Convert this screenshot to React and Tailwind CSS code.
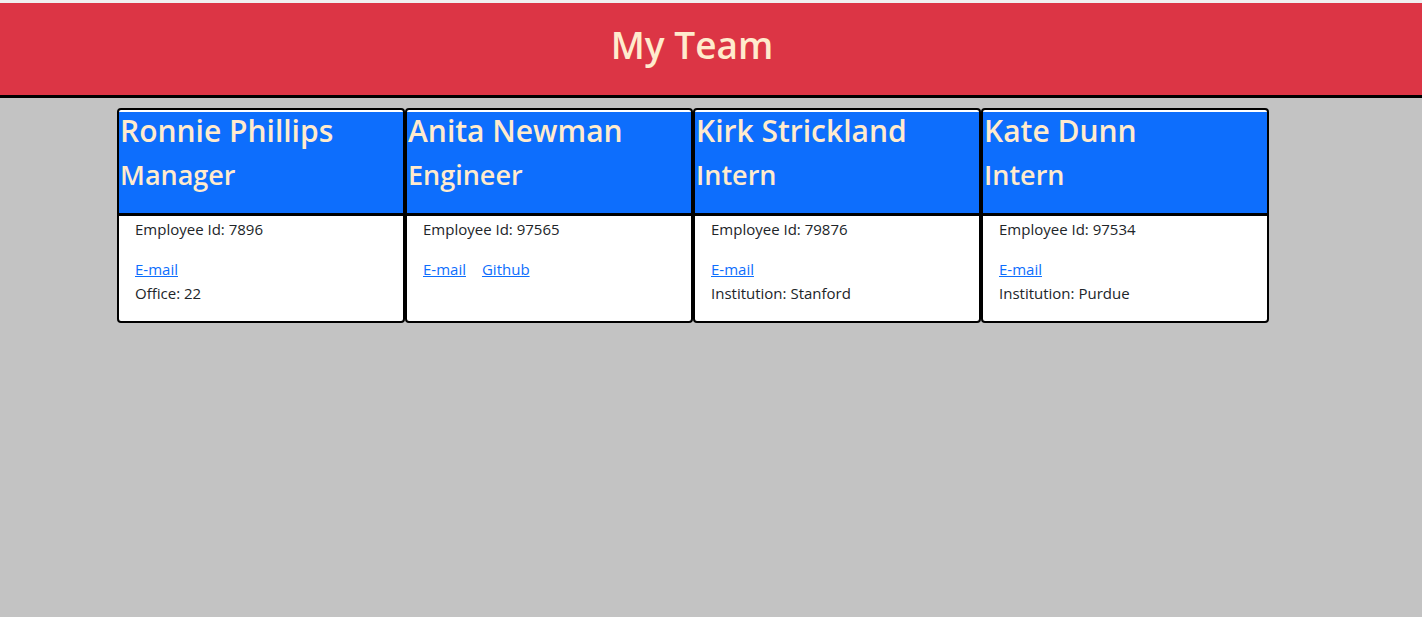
const team = [
  { name: "Ronnie Phillips", role: "Manager", id: 7896, extra: "Office: 22" },
  { name: "Anita Newman", role: "Engineer", id: 97565, github: true },
  { name: "Kirk Strickland", role: "Intern", id: 79876, extra: "Institution: Stanford" },
  { name: "Kate Dunn", role: "Intern", id: 97534, extra: "Institution: Purdue" },
];

const EmployeeCard = ({ person }) => (
  <div className="w-[288px] border-2 border-black rounded-[4px] bg-white overflow-hidden">
    {/* Card header */}
    <div className="h-[104px] bg-[#0d6efd] border-b-[3px] border-black pl-px text-[#ffebcd]">
      <h2 className="text-[30px] leading-[38px] font-semibold mt-[2px] mb-[8px]">{person.name}</h2>
      <h3 className="text-[27px] leading-[34px] font-semibold">{person.role}</h3>
    </div>

    {/* Card body */}
    <div className="h-[105px] px-4 pt-px text-[15px] leading-6 text-[#212529]">
      <p className="mb-4">Employee Id: {person.id}</p>
      <div className="flex gap-4">
        <a href="#" className="text-[#0d6efd] underline">E-mail</a>
        {person.github && (
          <a href="#" className="text-[#0d6efd] underline">Github</a>
        )}
      </div>
      {person.extra && <p>{person.extra}</p>}
    </div>
  </div>
);

const App = () => {
  return (
    <div
      className="min-h-screen bg-[#c3c3c3] pt-[3px]"
      style={{ fontFamily: '"Open Sans", "Noto Sans", sans-serif' }}
    >
      <div className="absolute top-0 left-0 w-full h-[3px] bg-[#f0f0f0]" />
      {/* Top bar */}
      <header className="h-[95px] bg-[#dc3545] border-b-[3px] border-black flex items-center justify-center pr-[38px]">
        <h1 className="text-[37px] font-semibold text-[#ffebcd] -mt-[8px]">My Team</h1>
      </header>

      {/* Team cards */}
      <main className="ml-[117px] mt-[10px] flex">
        {team.map((person) => (
          <EmployeeCard key={person.name} person={person} />
        ))}
      </main>
    </div>
  );
};

export default App;
